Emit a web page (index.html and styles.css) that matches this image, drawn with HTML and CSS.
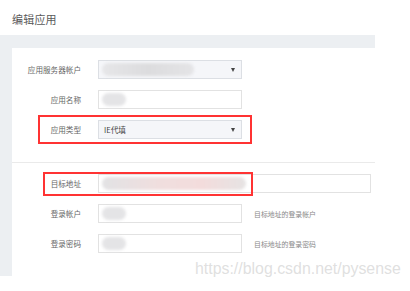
FILE: index.html
```html
<!DOCTYPE html>
<html>
<head>
<meta charset="utf-8">
<link rel="stylesheet" href="styles.css">
</head>
<body>
<div class="page">
  <div class="header"><span class="title">编辑应用</span></div>
  <div class="main">
    <div class="card">
      <div class="section">
        <div class="row">
          <div class="label">应用服务器帐户</div>
          <div class="field select w-sm"><span class="blob blob-long"></span><span class="arrow"></span></div>
        </div>
        <div class="row">
          <div class="label">应用名称</div>
          <div class="field w-sm"><span class="blob blob-short"></span></div>
        </div>
        <div class="row">
          <div class="label">应用类型</div>
          <div class="field select w-sm"><span class="val">IE代填</span><span class="arrow"></span></div>
        </div>
      </div>
      <div class="divider"></div>
      <div class="section">
        <div class="row">
          <div class="label">目标地址</div>
          <div class="field w-lg"><span class="blob blob-url"></span></div>
        </div>
        <div class="row">
          <div class="label">登录帐户</div>
          <div class="field w-sm"><span class="blob blob-short"></span></div>
          <div class="hint">目标地址的登录帐户</div>
        </div>
        <div class="row">
          <div class="label">登录密码</div>
          <div class="field w-sm"><span class="blob blob-short"></span></div>
          <div class="hint">目标地址的登录密码</div>
        </div>
      </div>
      <div class="mark mark-type"></div>
      <div class="mark mark-url"></div>
    </div>
  </div>
  <div class="watermark">https://blog.csdn.net/pysense</div>
</div>
</body>
</html>
```

FILE: styles.css
```css
html, body {
  margin: 0;
  padding: 0;
  background: #ffffff;
}
body {
  font-family: "Noto Sans CJK SC", "Noto Sans", sans-serif;
  color: #555;
}
.page {
  position: relative;
  width: 410px;
  height: 291px;
  overflow: hidden;
}
.header {
  height: 35px;
  box-sizing: border-box;
  padding: 5px 0 0 12px;
}
.title {
  font-size: 11px;
  line-height: 18px;
  color: #5a5a5a;
  letter-spacing: 0.2px;
}
.main {
  width: 375px;
  height: 241px;
  box-sizing: border-box;
  background: #eceff2;
  padding: 13px 0 0 12px;
}
.card {
  position: relative;
  background: #ffffff;
  height: 228px;
  box-sizing: border-box;
  padding-top: 12px;
}
.section {
  display: flex;
  flex-direction: column;
  gap: 11px;
}
.row {
  display: flex;
  align-items: center;
  height: 19px;
}
.label {
  width: 69px;
  margin-right: 17px;
  text-align: right;
  font-size: 7.6px;
  color: #666;
  white-space: nowrap;
}
.field {
  position: relative;
  height: 19px;
  box-sizing: border-box;
  border: 1px solid #e2e2e2;
  background: #fff;
  display: flex;
  align-items: center;
}
.w-sm { width: 144px; }
.w-lg { width: 273px; }
.select {
  background: #f5f6f9;
  border-color: #dcdfe4;
}
.val {
  font-size: 7.6px;
  color: #444;
  padding-left: 5px;
}
.arrow {
  position: absolute;
  right: 6px;
  top: 7px;
  width: 0;
  height: 0;
  border-left: 2.5px solid transparent;
  border-right: 2.5px solid transparent;
  border-top: 4px solid #444;
}
.blob {
  display: block;
  height: 13px;
  border-radius: 7px;
  background: #e4e4e6;
  filter: blur(1.5px);
  margin-left: 3px;
}
.blob-long { width: 92px; background: linear-gradient(90deg, #e6e6e8, #dcdcde 50%, #e4e4e6); }
.blob-short { width: 24px; }
.blob-url { width: 144px; background: linear-gradient(90deg, #e2e2e4, #f0dede 40%, #f3dcdc 70%, #e6e3e3); }
.hint {
  margin-left: 12px;
  font-size: 6.9px;
  color: #888;
  white-space: nowrap;
}
.divider {
  height: 1px;
  background: #eaeaea;
  margin: 23px 0 11px 0;
}
.mark {
  position: absolute;
  border: 2px solid #ff3333;
  box-sizing: border-box;
}
.mark-type {
  left: 26px;
  top: 67px;
  width: 214px;
  height: 29px;
}
.mark-url {
  left: 31px;
  top: 124px;
  width: 210px;
  height: 24px;
}
.watermark {
  position: absolute;
  left: 195px;
  top: 260px;
  font-family: "Liberation Sans", Arial, sans-serif;
  font-size: 15.9px;
  color: rgba(210, 210, 210, 0.7);
  white-space: nowrap;
}
```
